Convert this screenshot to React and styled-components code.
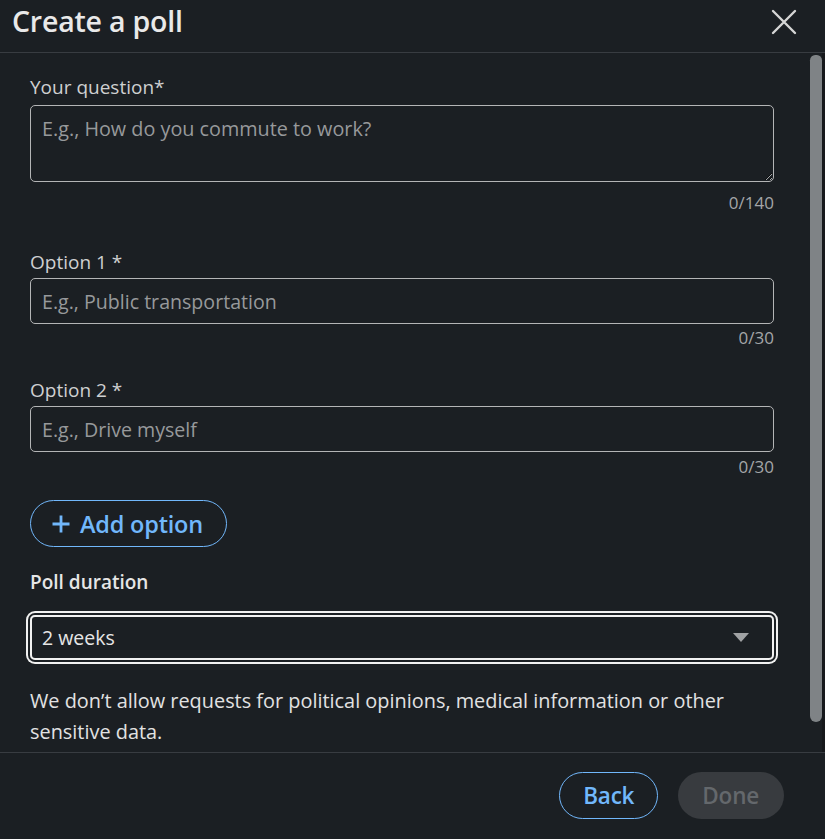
import React, { useState } from "react";
import styled, { createGlobalStyle } from "styled-components";

var GlobalStyle = createGlobalStyle`
  html, body {
    margin: 0;
    padding: 0;
    background: #1b1f23;
  }
  * {
    box-sizing: border-box;
  }
`;

var Dialog = styled.div`
  width: 825px;
  height: 839px;
  display: flex;
  flex-direction: column;
  background: #1b1f23;
  font-family: "Open Sans", "Noto Sans", sans-serif;
  color: rgba(255, 255, 255, 0.9);
  overflow: hidden;
`;

var Header = styled.div`
  height: 53px;
  flex: none;
  display: flex;
  align-items: flex-start;
  justify-content: space-between;
  padding: 2px 27px 0 12px;
  border-bottom: 1px solid #383c41;
`;

var Title = styled.h2`
  margin: 0;
  font-size: 28.5px;
  line-height: 38px;
  font-weight: 600;
  letter-spacing: -0.2px;
  color: #e9e9e9;
`;

var CloseButton = styled.button`
  background: none;
  border: 0;
  padding: 0;
  margin-top: 7px;
  width: 28px;
  height: 26px;
  display: flex;
  align-items: center;
  justify-content: center;
  cursor: pointer;
`;

var BodyRow = styled.div`
  flex: 1;
  min-height: 0;
  display: flex;
`;

var Body = styled.div`
  flex: 1;
  overflow: hidden;
  padding: 22px 36px 20px 30px;
`;

var Rail = styled.div`
  width: 15px;
  flex: none;
  padding: 2px 0 0;
  border-right: 3px solid #16181b;
`;

var Thumb = styled.div`
  width: 12px;
  height: 667px;
  border-radius: 6px 6px 7px 7px;
  background: #7f8386;
`;

var Field = styled.div`
  display: flex;
  flex-direction: column;
  margin-bottom: ${(p) => p.gap || 0}px;
`;

var Label = styled.label`
  font-size: 19px;
  line-height: 24px;
  color: ${(p) => (p.strong ? "#e6e6e6" : "#cfd0d1")};
  font-weight: ${(p) => (p.strong ? 600 : 400)};
  margin-bottom: ${(p) => p.below || 6}px;
`;

var TextArea = styled.textarea`
  height: 77px;
  resize: vertical;
  background: transparent;
  border: 1.5px solid #b4b5b6;
  border-radius: 5px;
  padding: 9px 11px;
  font-family: inherit;
  font-size: 19.8px;
  color: #e6e6e6;
  outline: none;

  &::placeholder {
    color: #97999b;
  }
`;

var Input = styled.input`
  height: 46px;
  background: transparent;
  border: 1.5px solid #b4b5b6;
  border-radius: 5px;
  padding: 0 11px;
  font-family: inherit;
  font-size: 19.6px;
  color: #e6e6e6;
  outline: none;

  &::placeholder {
    color: #97999b;
  }
`;

var Counter = styled.div`
  align-self: flex-end;
  font-size: 17px;
  line-height: 22px;
  color: #a4a6a8;
  margin-top: ${(p) => p.top}px;
`;

var PillButton = styled.button`
  display: inline-flex;
  align-items: center;
  justify-content: center;
  gap: 10px;
  height: 47px;
  padding: 0 ${(p) => p.right || 23}px 0 ${(p) => p.left || 23}px;
  border-radius: 24px;
  font-family: inherit;
  font-size: ${(p) => p.size || 22.5}px;
  font-weight: 600;
  letter-spacing: -0.2px;
  cursor: pointer;
  border: ${(p) => (p.filled ? "0" : "1.5px solid #71b7fb")};
  background: ${(p) => (p.filled ? "#383b3f" : "transparent")};
  color: ${(p) => (p.filled ? "#64686c" : "#71b7fb")};
`;

var AddRow = styled.div`
  margin: 22px 0 23px;
`;

var SelectBox = styled.div`
  margin: 0 0 25px;
  height: 45px;
  border: 2px solid #f1f1f1;
  border-radius: 5px;
  box-shadow: 0 0 0 2px #1b1f23, 0 0 0 4px #f1f1f1;
  display: flex;
  align-items: center;
  justify-content: space-between;
  padding: 0 23px 0 10px;
  font-size: 19.5px;
  color: #e6e6e6;
`;

var Caret = styled.span`
  width: 0;
  height: 0;
  border-left: 8px solid transparent;
  border-right: 8px solid transparent;
  border-top: 9px solid #a0a2a4;
`;

var Notice = styled.p`
  margin: 0;
  font-size: 19.9px;
  line-height: 31px;
  color: #e2e2e2;
`;

var Footer = styled.div`
  height: 87px;
  flex: none;
  display: flex;
  align-items: center;
  justify-content: flex-end;
  gap: 20px;
  padding: 0 41px 2px 0;
  border-top: 1px solid #383c41;
`;

function CloseIcon() {
  return (
    <svg width="26" height="26" viewBox="0 0 26 26">
      <path
        d="M2 2 L24 24 M24 2 L2 24"
        stroke="#d6d6d6"
        strokeWidth="2.4"
        strokeLinecap="round"
      />
    </svg>
  );
}

function PlusIcon() {
  return (
    <svg width="18" height="18" viewBox="0 0 18 18">
      <path d="M9 0.5 V17.5 M0.5 9 H17.5" stroke="#71b7fb" strokeWidth="2.8" />
    </svg>
  );
}

export default function App() {
  const [question, setQuestion] = useState("");
  const [opt1, setOpt1] = useState("");
  const [opt2, setOpt2] = useState("");

  return (
    <>
      <GlobalStyle />
      <Dialog>
        <Header>
          <Title>Create a poll</Title>
          <CloseButton aria-label="Dismiss">
            <CloseIcon />
          </CloseButton>
        </Header>
        <BodyRow>
          <Body>
            <Field gap={36}>
              <Label>Your question*</Label>
              <TextArea
                value={question}
                onChange={(e) => setQuestion(e.target.value)}
                placeholder="E.g., How do you commute to work?"
              />
              <Counter top={10}>{question.length}/140</Counter>
            </Field>
            <Field gap={29}>
              <Label below={4}>Option 1 *</Label>
              <Input
                value={opt1}
                onChange={(e) => setOpt1(e.target.value)}
                placeholder="E.g., Public transportation"
              />
              <Counter top={3}>{opt1.length}/30</Counter>
            </Field>
            <Field>
              <Label below={4}>Option 2 *</Label>
              <Input
                value={opt2}
                onChange={(e) => setOpt2(e.target.value)}
                placeholder="E.g., Drive myself"
              />
              <Counter top={4}>{opt2.length}/30</Counter>
            </Field>
            <AddRow>
              <PillButton left={21} right={23} size={23.5}>
                <PlusIcon />
                Add option
              </PillButton>
            </AddRow>
            <Label as="div" strong below={21}>
              Poll duration
            </Label>
            <SelectBox>
              <span>2 weeks</span>
              <Caret />
            </SelectBox>
            <Notice>
              We don’t allow requests for political opinions, medical
              information or other sensitive data.
            </Notice>
          </Body>
          <Rail>
            <Thumb />
          </Rail>
        </BodyRow>
        <Footer>
          <PillButton>Back</PillButton>
          <PillButton filled left={24} right={25}>
            Done
          </PillButton>
        </Footer>
      </Dialog>
    </>
  );
}
